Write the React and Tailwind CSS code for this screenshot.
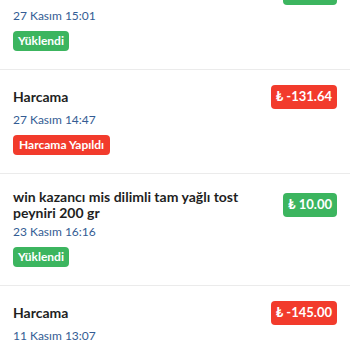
import React from "react";

const items = [
  { title: "Para Yükleme", date: "27 Kasım 15:01", status: "Yüklendi", amount: "₺ 50.00", kind: "in" },
  { title: "Harcama", date: "27 Kasım 14:47", status: "Harcama Yapıldı", amount: "₺ -131.64", kind: "out" },
  { title: "win kazancı mis dilimli tam yağlı tost peyniri 200 gr", date: "23 Kasım 16:16", status: "Yüklendi", amount: "₺ 10.00", kind: "in" },
  { title: "Harcama", date: "11 Kasım 13:07", status: "Harcama Yapıldı", amount: "₺ -145.00", kind: "out" },
];

function Row({ item, first }) {
  const isIn = item.kind === "in";
  return (
    <div className={first ? "px-[13px] pt-[15px] pb-[18px]" : "px-[13px] pt-[15px] pb-[18px] border-t border-[#ebebeb]"}>
      <div className="flex items-center justify-between gap-3">
        <div className="text-[14px] leading-4 font-bold text-[#1f1f1f]">{item.title}</div>
        <div
          className={
            isIn
              ? "shrink-0 h-6 px-[5px] rounded-[4px] flex items-center text-[13px] font-bold text-white bg-[#3cb55f]"
              : "shrink-0 h-6 px-[5px] rounded-[4px] flex items-center text-[13px] font-bold text-white bg-[#f23b2c]"
          }
        >
          {item.amount}
        </div>
      </div>
      <div className="text-[12px] leading-5 pt-px text-[#345c94]">{item.date}</div>
      <div className="mt-[5px] flex">
        <div
          className={
            isIn
              ? "h-5 px-[5px] rounded-[4px] flex items-center text-[12px] font-bold text-white bg-[#3cb55f]"
              : "h-5 px-[6px] rounded-[4px] flex items-center text-[12px] font-bold text-white bg-[#f23b2c]"
          }
        >
          {item.status}
        </div>
      </div>
    </div>
  );
}

export default function App() {
  return (
    <div className="w-[350px] h-[350px] overflow-hidden bg-white font-['Lato','Noto_Sans',sans-serif]">
      <div className="-mt-[34px]">
        {items.map((it, i) => (
          <Row key={i} item={it} first={i === 0} />
        ))}
      </div>
    </div>
  );
}
